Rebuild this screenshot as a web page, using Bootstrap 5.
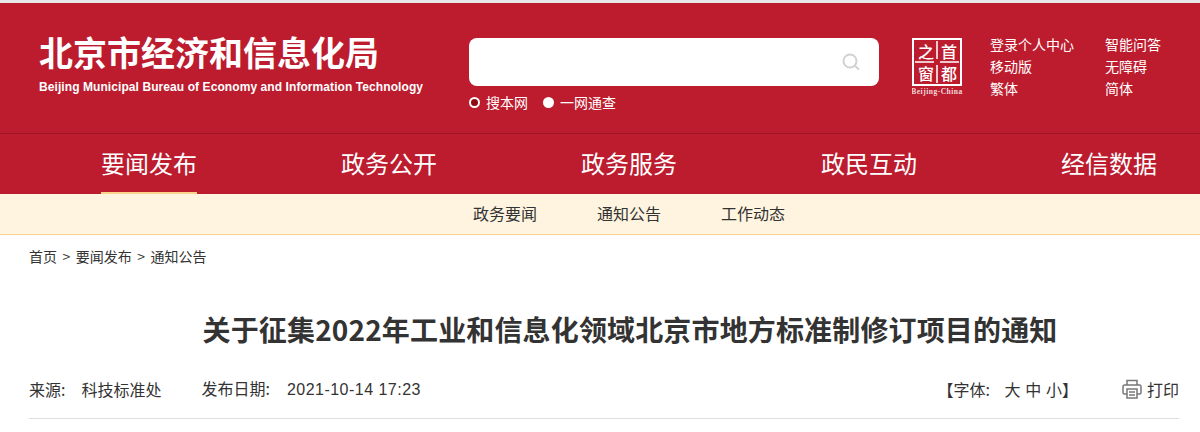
<!DOCTYPE html>
<html lang="zh-CN">
<head>
    <meta charset="UTF-8">
    <title>关于征集2022年工业和信息化领域北京市地方标准制修订项目的通知</title>
    <link href="https://cdn.jsdelivr.net/npm/bootstrap@5.3.0/dist/css/bootstrap.min.css" rel="stylesheet">
    <style>
        body {
            font-family: "Noto Sans CJK SC", "Liberation Sans", sans-serif;
            color: #333;
            background: #fff;
            overflow: hidden;
        }
        a { color: inherit; text-decoration: none; }
        .top-strip { height: 3px; background: #e8e8e8; }
        .site-head {
            height: 131px;
            background: #bc1c2e;
            border-bottom: 1px solid #9c1526;
            color: #fff;
            padding: 35px 0 0 39px;
        }
        .brand-box { width: 430px; margin-top: -4px; }
        .brand-name { font-size: 34px; font-weight: 700; line-height: 34px; margin-top: 1px; }
        .brand-en {
            font-family: "Liberation Sans", Arial, sans-serif;
            font-size: 12px;
            font-weight: 700;
            line-height: 14px;
            letter-spacing: .08px;
            margin-top: 11px;
            white-space: nowrap;
        }
        .search-box { width: 410px; }
        .search-input {
            height: 48px;
            background: #fff;
            border-radius: 8px;
            padding-right: 19px;
        }
        .search-scope { font-size: 14px; line-height: 18px; margin-top: 7px; gap: 15px; }
        .scope-dot {
            width: 11px;
            height: 11px;
            border-radius: 50%;
            background: #fff;
            margin-right: 6px;
        }
        .scope-dot-on { background: #8f0a12; border: 2px solid #fff; }
        .city-logo { width: 54px; height: 60px; margin-left: 33px; }
        .head-links {
            font-size: 14px;
            line-height: 22px;
            margin-left: 24px;
            margin-top: -5px;
        }
        .head-links-col { width: 115px; }
        .main-nav { height: 60px; background: #bc1c2e; padding-left: 101px; gap: 144px; }
        .main-nav a {
            display: block;
            height: 60px;
            font-size: 24px;
            line-height: 58px;
            color: #fff;
            white-space: nowrap;
        }
        .main-nav a.nav-on { border-bottom: 2px solid #fbd38a; }
        .sub-nav {
            height: 41px;
            background: #fef4df;
            border-bottom: 1px solid #fbd38a;
            font-size: 16px;
            line-height: 39px;
            gap: 60px;
            padding-left: 473px;
        }
        .crumbs {
            font-size: 14px;
            line-height: 18px;
            padding: 12px 0 0 29px;
        }
        .crumbs i { font-style: normal; margin: 0 5.500px; }
        .art-title {
            font-size: 28px;
            font-weight: 700;
            line-height: 38px;
            letter-spacing: .15px;
            margin: 45px 0 0;
            text-align: center;
            color: #333;
            padding-left: 60px;
        }
        .art-meta {
            height: 50px;
            margin: 21px 21px 0 29px;
            font-size: 16px;
            border-bottom: 1px solid #ddd;
            padding-bottom: 10px;
        }
        .meta-val { margin-left: 16px; }
        .meta-pub { margin-left: 40px; }
        .meta-date { font-family: "Liberation Sans", Arial, sans-serif; letter-spacing: .48px; margin-left: 17px; }
        .font-size-pick { margin-right: 44px; word-spacing: 1.200px; }
        .print-btn svg { margin-right: 5px; }
    </style>
</head>
<body>
    <div class="top-strip"></div>
    <header class="site-head d-flex">
        <div class="brand-box flex-shrink-0">
            <div class="brand-name">北京市经济和信息化局</div>
            <div class="brand-en">Beijing Municipal Bureau of Economy and Information Technology</div>
        </div>
        <div class="search-box flex-shrink-0">
            <div class="search-input d-flex align-items-center justify-content-end">
                <svg width="18" height="18" viewBox="0 0 18 18" fill="none" stroke="#d2d2d2" stroke-width="2">
                    <circle cx="8" cy="8" r="6.500"/>
                    <path d="M12.500 12.500L17 16.500"/>
                </svg>
            </div>
            <div class="search-scope d-flex align-items-center">
                <span class="d-flex align-items-center"><span class="scope-dot scope-dot-on"></span>搜本网</span>
                <span class="d-flex align-items-center"><span class="scope-dot"></span>一网通查</span>
            </div>
        </div>
        <svg class="city-logo flex-shrink-0" viewBox="0 0 54 60">
            <rect x="1" y="1" width="48" height="46" fill="none" stroke="#fff" stroke-width="2"/>
            <path d="M25 3V21M25 27V45M3 24H22M28 24H47" stroke="#efc9cc" stroke-width="2"/>
            <text x="14" y="20" font-size="16" font-weight="500" fill="#fff" text-anchor="middle" font-family="Noto Sans CJK SC, serif">之</text>
            <text x="37" y="20" font-size="16" font-weight="500" fill="#fff" text-anchor="middle" font-family="Noto Sans CJK SC, serif">首</text>
            <text x="14" y="42" font-size="16" font-weight="500" fill="#fff" text-anchor="middle" font-family="Noto Sans CJK SC, serif">窗</text>
            <text x="37" y="42" font-size="16" font-weight="500" fill="#fff" text-anchor="middle" font-family="Noto Sans CJK SC, serif">都</text>
            <text x="25" y="56" font-size="7.500" font-weight="700" letter-spacing=".5" fill="#f3d9db" text-anchor="middle" font-family="Liberation Serif, serif">Beijing-China</text>
        </svg>
        <div class="head-links d-flex">
            <div class="head-links-col">
                <a class="d-block" href="#">登录个人中心</a>
                <a class="d-block" href="#">移动版</a>
                <a class="d-block" href="#">繁体</a>
            </div>
            <div class="head-links-col">
                <a class="d-block" href="#">智能问答</a>
                <a class="d-block" href="#">无障碍</a>
                <a class="d-block" href="#">简体</a>
            </div>
        </div>
    </header>
    <nav class="main-nav d-flex">
        <a class="nav-on" href="#">要闻发布</a>
        <a href="#">政务公开</a>
        <a href="#">政务服务</a>
        <a href="#">政民互动</a>
        <a href="#">经信数据</a>
    </nav>
    <div class="sub-nav d-flex">
        <a href="#">政务要闻</a>
        <a href="#">通知公告</a>
        <a href="#">工作动态</a>
    </div>
    <div class="crumbs"><a href="#">首页</a><i>&gt;</i><a href="#">要闻发布</a><i>&gt;</i><a href="#">通知公告</a></div>
    <h1 class="art-title">关于征集2022年工业和信息化领域北京市地方标准制修订项目的通知</h1>
    <div class="art-meta d-flex align-items-center">
        <span>来源:<span class="meta-val">科技标准处</span></span>
        <span class="meta-pub">发布日期:<span class="meta-date">2021-10-14 17:23</span></span>
        <span class="font-size-pick ms-auto">【字体:&nbsp;&nbsp;&nbsp;大 中 小】</span>
        <a class="print-btn d-flex align-items-center" href="#">
            <svg width="20" height="20" viewBox="0 0 20 20" fill="none" stroke="#777" stroke-width="1.500">
                <path d="M5 6V1.500H15V6"/>
                <path d="M5 15H2.500A1.500 1.500 0 0 1 1 13.500V7.500A1.500 1.500 0 0 1 2.500 6H17.500A1.500 1.500 0 0 1 19 7.500V13.500A1.500 1.500 0 0 1 17.500 15H15"/>
                <rect x="5" y="10" width="10" height="9"/>
                <path d="M7 13H13M7 16H13"/>
            </svg>打印
        </a>
    </div>
</body>
</html>
